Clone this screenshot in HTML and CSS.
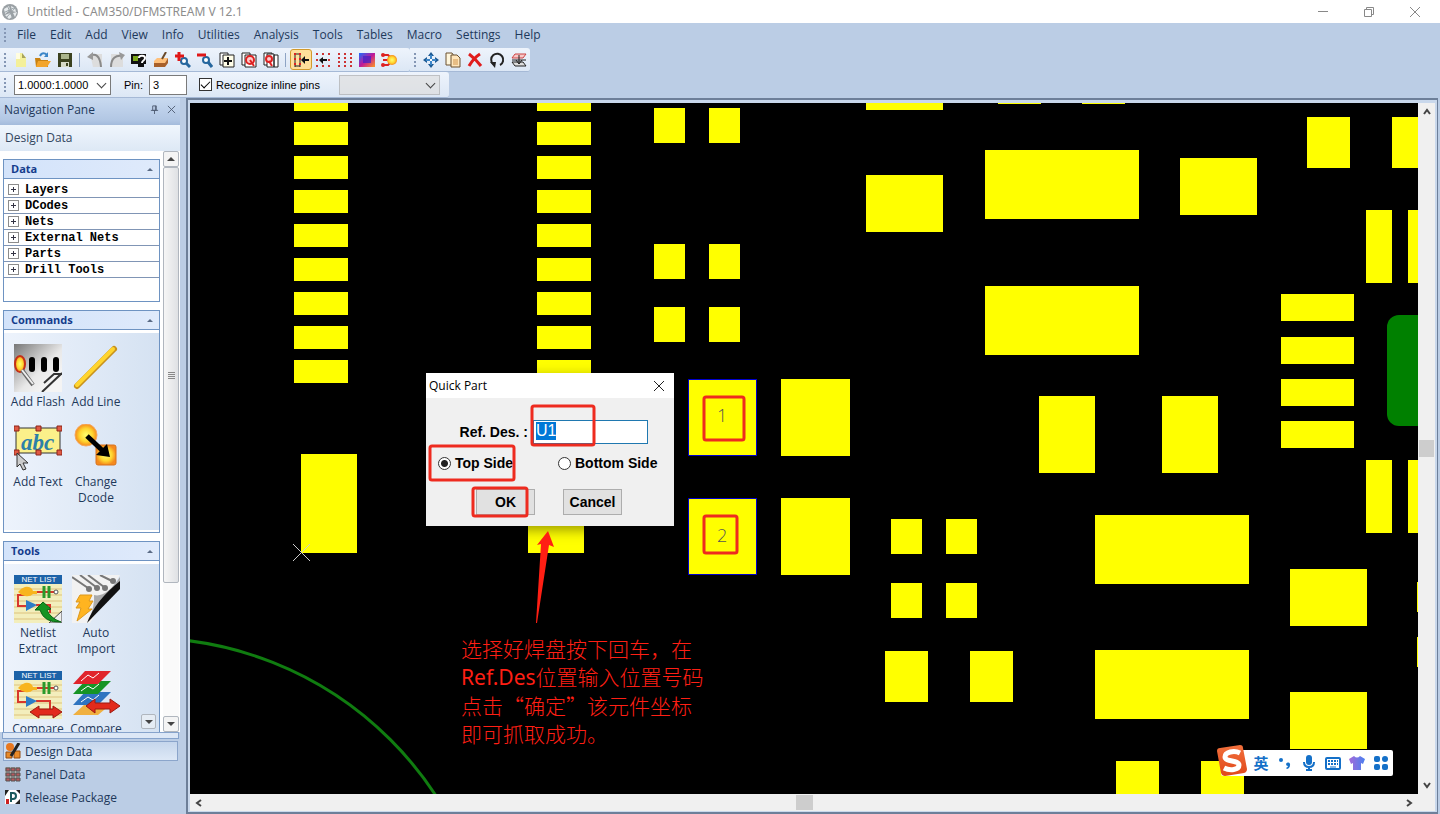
FILE: index.html
```html
<!DOCTYPE html>
<html lang="en">
<head>
    <meta charset="UTF-8">
    <meta name="viewport" content="width=device-width, initial-scale=1.0">
    <title>Untitled - CAM350/DFMSTREAM V 12.1</title>
    <link rel="stylesheet" href="styles.css">
</head>
<body>
<svg class="defs" width="0" height="0">
    <defs>
        <linearGradient id="gray" x1="0" y1="0" x2="1" y2="1"><stop offset="0" stop-color="#777"/><stop offset=".55" stop-color="#e8e8e8"/><stop offset="1" stop-color="#fff"/></linearGradient>
        <radialGradient id="glow"><stop offset="0" stop-color="#ffff70"/><stop offset=".6" stop-color="#ffd530"/><stop offset="1" stop-color="#f58a1c"/></radialGradient>
        <linearGradient id="rainbow" x1="0" y1="0" x2="1" y2="1"><stop offset="0" stop-color="#1a6cff"/><stop offset=".5" stop-color="#c0189a"/><stop offset="1" stop-color="#ff9a20"/></linearGradient>
        <linearGradient id="shirt"><stop offset="0" stop-color="#a56ad8"/><stop offset="1" stop-color="#4a80f0"/></linearGradient>
        <linearGradient id="logo" x1="0" y1="0" x2="0" y2="1"><stop offset="0" stop-color="#f2703c"/><stop offset="1" stop-color="#e0481a"/></linearGradient>
        <symbol id="netlist" viewBox="0 0 48 48">
            <rect width="48" height="48" fill="#f3eebc"/>
            <path d="M0 14h48M0 20h48M0 26h48M0 32h48M0 38h48M0 44h48" stroke="#ddc27e"/>
            <rect width="48" height="9" fill="#1c62a8"/>
            <text x="25" y="7" class="net-label">NET LIST</text>
            <path d="M12 20H4v11h10M20 17h20M22 30h14v8" fill="none" stroke="#d8372c" stroke-width="2"/>
            <path d="M4 17q3-4 7-5 6-1 8 4h4v3h-4q-3 3-8 2-4-1-7-4z" fill="#f8b51e"/>
            <path d="M30 11v12M35 11v12" stroke="#2a9a2c" stroke-width="3"/>
            <circle cx="42" cy="17" r="2" fill="#fff" stroke="#555"/>
            <path d="M12 25l11 5-11 6z" fill="#2d7cc7"/>
        </symbol>
    </defs>
</svg>

<header class="titlebar">
    <svg class="app-icon" viewBox="0 0 16 16"><circle cx="8" cy="8" r="8" fill="#9aa0a4"/><path d="M2 5l5-3 1 4-5 4zM9 2l4 2 1 4-4-1zM3 11l5-2 2 4-3 2zM11 9l4-1-2 5z" fill="#e8ecee"/><path d="M1 9l13-6M4 14L13 4M5 1l6 14" stroke="#9aa3a8"/></svg>
    <span class="title">Untitled - CAM350/DFMSTREAM V 12.1</span>
    <div class="window-buttons">
        <button aria-label="Minimize"><svg viewBox="0 0 12 12"><path d="M1 5.500h10"/></svg></button>
        <button aria-label="Restore"><svg viewBox="0 0 12 12"><path d="M1.500 3.500h7v7h-7zM3.500 3v-1.500h7v7h-2"/></svg></button>
        <button aria-label="Close"><svg viewBox="0 0 12 12"><path d="M1 1l10 10M11 1L1 11"/></svg></button>
    </div>
</header>

<nav class="menubar">
    <i class="grip"></i>
    <a href="#">File</a>
    <a href="#">Edit</a>
    <a href="#">Add</a>
    <a href="#">View</a>
    <a href="#">Info</a>
    <a href="#">Utilities</a>
    <a href="#">Analysis</a>
    <a href="#">Tools</a>
    <a href="#">Tables</a>
    <a href="#">Macro</a>
    <a href="#">Settings</a>
    <a href="#">Help</a>
</nav>

<div class="toolbars">
    <div class="toolbar main-tools">
        <i class="grip"></i>
        <button aria-label="New"><svg viewBox="0 0 16 16"><path d="M3 1h6l4 5v9H3z" fill="#f4f09a"/><path d="M9 1v5h4z" fill="#a8a45c"/><path d="M3 1h4v6H3z" fill="#fffde0"/></svg></button>
        <button aria-label="Open"><svg viewBox="0 0 16 16"><path d="M0 6h5l1 2h7v7H1z" fill="#c98212"/><path d="M3 9h13l-4 6H1z" fill="#f3a52c"/><path d="M5 4c2-4 5-3 7-1" fill="none" stroke="#3c86c8" stroke-width="2"/><path d="M13 0v5H9z" fill="#3c86c8"/></svg></button>
        <button aria-label="Save"><svg viewBox="0 0 16 16"><path d="M1 1h14v14H1z" fill="#3b4220"/><path d="M4 2h8v5H4z" fill="#a9b48c"/><path d="M4 10h8v5H4z" fill="#d6dac8"/><path d="M9 11h2v3H9z" fill="#3b4220"/></svg></button>
        <i class="separator"></i>
        <button aria-label="Undo"><svg viewBox="0 0 16 16"><path d="M3 2h12v13H6z" fill="#ddd"/><path d="M3 4c5-3 10-1 11 11" fill="none" stroke="#8a8a8a" stroke-width="2"/><path d="M6 0v8L0 5z" fill="#999"/></svg></button>
        <button aria-label="Redo"><svg viewBox="0 0 16 16"><path d="M2 2h12v13H2z" fill="#ddd"/><path d="M2 15C2 6 7 3 13 4" fill="none" stroke="#8a8a8a" stroke-width="2"/><path d="M10 0l6 3-4 5z" fill="#999"/></svg></button>
        <button aria-label="Query"><svg viewBox="0 0 16 16"><path d="M0 2h15v10H0z" fill="#111"/><path d="M2 4h5v5H2z" fill="#7aa81c"/><path d="M8 6c0-3 6-3 6 0s-3 2-3 5" fill="none" stroke="#fff" stroke-width="2"/><path d="M7 12h6v3H7z" fill="#111"/></svg></button>
        <button aria-label="Redraw"><svg viewBox="0 0 16 16"><path d="M1 9l3-3h11l-3 6H1z" fill="#ffc07a"/><path d="M1 11h11l3-5v5l-3 4H1z" fill="#a8602a"/><path d="M13 0L9 7" stroke="#6a4a2a" stroke-width="2"/></svg></button>
        <button aria-label="Zoom in"><svg viewBox="0 0 16 16"><circle cx="9" cy="9" r="3" fill="#fff" stroke="#26679e" stroke-width="2"/><path d="M11 11l4 4" stroke="#26679e" stroke-width="3"/><path d="M4 0v9M0 4h9" stroke="#e01818" stroke-width="3"/></svg></button>
        <button aria-label="Zoom out"><svg viewBox="0 0 16 16"><circle cx="9" cy="8" r="3" fill="#fff" stroke="#26679e" stroke-width="2"/><path d="M11 10l4 5" stroke="#26679e" stroke-width="3"/><path d="M0 3h9" stroke="#e01818" stroke-width="3"/></svg></button>
        <button aria-label="Add page"><svg viewBox="0 0 16 16"><path d="M1 1h8v12H1z" fill="#fff" stroke="#222"/><path d="M4 3h11v12H4z" fill="#fffde8" stroke="#222"/><path d="M9 5v8M5 9h8" stroke="#111" stroke-width="2"/></svg></button>
        <button aria-label="Zoom page"><svg viewBox="0 0 16 16"><path d="M1 1h8v12H1z" fill="#fff" stroke="#222"/><path d="M4 3h11v12H4z" fill="#fff" stroke="#222"/><circle cx="9" cy="8" r="4" fill="#fcc" stroke="#d22" stroke-width="2"/><path d="M9 8l4 6" stroke="#d22" stroke-width="2"/></svg></button>
        <button aria-label="Previous view"><svg viewBox="0 0 16 16"><path d="M1 1h8v12H1z" fill="#fff" stroke="#222"/><path d="M4 2h7v13H4zM11 3h4v12h-4z" fill="#fff" stroke="#222"/><circle cx="6" cy="7" r="3" fill="#fcc" stroke="#d22" stroke-width="2"/><path d="M6 9l3 5" stroke="#d22" stroke-width="2"/></svg></button>
        <i class="separator"></i>
        <button class="active" aria-label="Snap to object"><svg viewBox="0 0 16 16"><path d="M2 1v14M7 1v14M2 2h5M2 14h5" stroke="#222"/><path d="M2 1v14M7 1v14" stroke="#d22" stroke-width="2" stroke-dasharray="2 3"/><path d="M8 8l4-4v3h4v2h-4v3z" fill="#111"/></svg></button>
        <button aria-label="Snap to grid"><svg viewBox="0 0 16 16"><path d="M1 2h14M1 8h14M1 14h14" stroke="#c33" stroke-width="2" stroke-dasharray="2 4"/><path d="M4 8l4-3v2h4v2H8v3z" fill="#111"/></svg></button>
        <button aria-label="Show grid"><svg viewBox="0 0 16 16"><path d="M1 2h14M1 6h14M1 10h14M1 14h14" stroke="#c33" stroke-width="2" stroke-dasharray="2 4"/></svg></button>
        <button aria-label="Colors"><svg viewBox="0 0 16 16"><path d="M0 1h16v14H0z" fill="url(#rainbow)"/><path d="M4 4h8v7H4z" fill="#3c22c8" opacity=".7"/></svg></button>
        <button aria-label="Highlight"><svg viewBox="0 0 16 16"><path d="M2 3h5l3 3M2 8h6M2 13h5l3-3" fill="none" stroke="#d22" stroke-width="2"/><circle cx="2" cy="3" r="2" fill="#d22"/><circle cx="2" cy="13" r="2" fill="#d22"/><circle cx="11" cy="8" r="5" fill="url(#glow)"/></svg></button>
    </div>
    <div class="toolbar">
        <i class="grip"></i>
        <button aria-label="Move"><svg viewBox="0 0 16 16"><path d="M8 0l3 4H5zM8 16l3-4H5zM0 8l4-3v6zM16 8l-4-3v6z" fill="#1d5a94"/><path d="M8 3v10M3 8h10" stroke="#3c86c8" stroke-width="2"/><path d="M7 7h2v2H7z" fill="#fff"/></svg></button>
        <button aria-label="Copy"><svg viewBox="0 0 16 16"><path d="M1 1h6l2 3v9H1z" fill="#fff6dc" stroke="#6a5030"/><path d="M6 3h6l3 3v9H6z" fill="#ffe6bc" stroke="#6a5030"/><path d="M8 8h5M8 10h5M8 12h5" stroke="#d0944c"/></svg></button>
        <button aria-label="Delete"><svg viewBox="0 0 16 16"><path d="M2 2c4 3 9 8 12 12M13 2C8 5 5 9 2 14" fill="none" stroke="#e01c1c" stroke-width="3"/></svg></button>
        <button aria-label="Rotate"><svg viewBox="0 0 16 16"><path d="M4 12A6 6 0 1 1 11 13" fill="none" stroke="#222" stroke-width="2"/><path d="M1 10l6 0-1 6z" fill="#222"/></svg></button>
        <button aria-label="Mirror"><svg viewBox="0 0 16 16"><path d="M4 2h11l-3 4H1z" fill="#f8c8c8" stroke="#c44"/><path d="M1 10h11l3 4H4z" fill="#ddd" stroke="#222"/><path d="M8 3v9M5 8l3 4 3-4M1 8h14" fill="none" stroke="#222"/></svg></button>
    </div>
</div>

<form class="toolbar options">
    <i class="grip"></i>
    <span class="combo scale"><select aria-label="Scale"><option>1.0000:1.0000</option></select></span>
    <label for="pin">Pin:</label>
    <input id="pin" class="pin" type="text" value="3">
    <label class="inline-pins"><input type="checkbox" checked>Recognize inline pins</label>
    <span class="combo layer"><select aria-label="Layer" disabled><option></option></select></span>
</form>

<main class="workspace">
    <aside class="navigation">
        <div class="pane-title">
            <span>Navigation Pane</span>
            <button aria-label="Pin pane"><svg viewBox="0 0 10 10"><path d="M3 1h4v5H3zM6 1v5M1 6h8M5 6v4"/></svg></button>
            <button aria-label="Close pane"><svg viewBox="0 0 10 10"><path d="M1 1l8 8M9 1L1 9"/></svg></button>
        </div>
        <h2 class="pane-heading">Design Data</h2>
        <div class="pane-scroll">
            <div class="groups">
                <section class="group data">
                    <h3>Data<i></i></h3>
                    <ul class="tree">
                        <li>Layers</li>
                        <li>DCodes</li>
                        <li>Nets</li>
                        <li>External Nets</li>
                        <li>Parts</li>
                        <li>Drill Tools</li>
                    </ul>
                </section>
                <section class="group commands">
                    <h3>Commands<i></i></h3>
                    <div class="tiles">
                        <button>
                            <svg viewBox="0 0 48 48"><path d="M0 0h48v48H0z" fill="url(#gray)"/><path d="M27 48l21-21v21z" fill="#f4f4f4"/><ellipse cx="6" cy="20" rx="5" ry="8" fill="url(#glow)" stroke="#c43018" stroke-width="2"/><rect x="15" y="13" width="6" height="15" rx="3"/><rect x="27" y="13" width="6" height="15" rx="3"/><rect x="39" y="13" width="6" height="15" rx="3"/><path d="M8 26l11 15" stroke="#666" stroke-width="4"/><path d="M8 26l11 14" stroke="#eee" stroke-width="2"/><path d="M28 48l20-19M30 39l10-9h8" fill="none" stroke="#333" stroke-width="2"/></svg>
                            <span>Add Flash</span>
                        </button>
                        <button>
                            <svg viewBox="0 0 48 48"><path d="M5 42L42 5" stroke="#c8921c" stroke-width="6" stroke-linecap="round"/><path d="M5 41L41 5" stroke="#ffd52e" stroke-width="4" stroke-linecap="round"/></svg>
                            <span>Add Line</span>
                        </button>
                        <button>
                            <svg viewBox="0 0 48 48"><path d="M2 4h44v25H2z" fill="#fbf08a" stroke="#333"/><text x="7" y="26" class="abc">abc</text><path d="M0 2h5v5H0zM22 2h5v5h-5zM43 2h5v5h-5zM0 26h5v5H0zM22 26h5v5h-5zM43 26h5v5h-5z" fill="#e05a44" stroke="#8c2418"/><path d="M3 29v14l3-3 3 6 3-1-3-6h5z" fill="#ccc" stroke="#333"/></svg>
                            <span>Add Text</span>
                        </button>
                        <button>
                            <svg viewBox="0 0 48 48"><circle cx="14" cy="11" r="11" fill="url(#glow)" stroke="#f5a860"/><rect x="24" y="21" width="20" height="20" rx="2" fill="url(#glow)" stroke="#d8721c"/><path d="M15 12l17 16" stroke="#000" stroke-width="5"/><path d="M38 33l-14-2 11-11z"/></svg>
                            <span>Change Dcode</span>
                        </button>
                    </div>
                </section>
                <section class="group tools">
                    <h3>Tools<i></i></h3>
                    <div class="tiles">
                        <button>
                            <svg viewBox="0 0 48 48"><use href="#netlist"/><path d="M35 48l13-12v12z" fill="#eee" stroke="#444"/><path d="M21 35l8-8 8 7-4 1q3 8 14 12-17 1-21-12z" fill="#149422" stroke="#0a6414"/></svg>
                            <span>Netlist Extract</span>
                        </button>
                        <button>
                            <svg viewBox="0 0 48 48"><path d="M0 0h48L18 48H0z" fill="#f2f2f2"/><path d="M0 2l16 11M8 0l16 12M16 0l16 12M28 0l12 6" stroke="#777" stroke-width="2"/><path d="M48 8L17 46q6-17 5-26 12 3 26-18z" fill="#aaa"/><path d="M48 6v8L15 48q8-22 33-42z" fill="#111"/><g fill="#777"><circle cx="17" cy="14" r="3"/><circle cx="25" cy="13" r="3"/><circle cx="33" cy="13" r="3"/><circle cx="41" cy="6" r="3"/></g><path d="M8 20h12l-3 6h4l-5 8h4L5 46l4-13H4l4-6H4z" fill="#ffb420" stroke="#dc981c"/></svg>
                            <span>Auto Import</span>
                        </button>
                        <button>
                            <svg viewBox="0 0 48 48"><use href="#netlist"/><path d="M16 41l9-6v3h14v-3l9 6-9 6v-3H25v3z" fill="#e22a1c" stroke="#9c1a10"/></svg>
                            <span>Compare</span>
                        </button>
                        <button>
                            <svg viewBox="0 0 48 48"><path d="M13 33h26L26 44H1z" fill="#f0b040"/><path d="M13 21h26L26 34H1z" fill="#2f74c0"/><path d="M13 10h26L26 23H1z" fill="#169426"/><path d="M13 0h26L26 13H1z" fill="#e0242c"/><path d="M9 10l7-6 5 3 6-5M9 20l7-5 5 3 6-5M9 31l7-5 5 3 6-5" fill="none" stroke="#fff"/><path d="M14 35l9-7v4h15v-4l10 7-10 7v-4H23v4z" fill="#e22a1c" stroke="#9c1a10"/></svg>
                            <span>Compare</span>
                        </button>
                    </div>
                </section>
                <button class="more" aria-label="More tools"></button>
            </div>
            <div class="pane-bar">
                <button class="up" aria-label="Scroll up"></button>
                <div class="thumb"></div>
                <button class="down" aria-label="Scroll down"></button>
            </div>
        </div>
        <div class="splitter"></div>
        <div class="pane-tabs">
            <button class="selected"><svg viewBox="0 0 16 16"><circle cx="5" cy="4" r="4" fill="#e87820"/><path d="M1 9h6v6H1zM9 8h6v7H9z" fill="#e88a28" stroke="#944c10"/><path d="M14 0L6 13" stroke="#222" stroke-width="3"/></svg>Design Data</button>
            <button><svg viewBox="0 0 16 16"><path d="M0 1h15v14H0z" fill="#aaa"/><path d="M1 2h4v3H1zM6 2h4v3H6zM11 2h4v3h-4zM1 7h4v3H1zM6 7h4v3H6zM11 7h4v3h-4zM1 12h4v3H1zM6 12h4v3H6zM11 12h4v3h-4z" fill="#b8585c" stroke="#555"/></svg>Panel Data</button>
            <button><svg viewBox="0 0 16 16"><path d="M0 1h15v14H0z" fill="#fff"/><path d="M0 1h4l-4 6zM11 1h4v4zM10 15l5-5v5z" fill="#222"/><path d="M1 10h3v5H1z" fill="#c22"/><path d="M6 13V4h2a3 3 0 0 1 0 6H6" fill="none" stroke="#1c5a5c" stroke-width="2"/></svg>Release Package</button>
        </div>
    </aside>

    <section class="editor">
        <div class="board">
            <svg class="layer-view" viewBox="190 103 1228 691" preserveAspectRatio="xMinYMin slice">
                <g fill="#ff0">
                    <path d="M294 88h54v23h-54zM294 122h54v23h-54zM294 156h54v23h-54zM294 190h54v23h-54zM294 224h54v23h-54zM294 258h54v23h-54zM294 292h54v23h-54zM294 326h54v23h-54zM294 360h54v23h-54z"/>
                    <path d="M537 88h54v23h-54zM537 122h54v23h-54zM537 156h54v23h-54zM537 190h54v23h-54zM537 224h54v23h-54zM537 258h54v23h-54zM537 292h54v23h-54zM537 326h54v23h-54zM537 360h54v23h-54z"/>
                    <path d="M301 454h56v99h-56zM528 454h56v99h-56z"/>
                    <path d="M654 108h31v35h-31zM709 108h31v35h-31zM654 244h31v35h-31zM709 244h31v35h-31zM654 307h31v35h-31zM709 307h31v35h-31z"/>
                    <path d="M781 379h69v77h-69zM781 498h69v77h-69z"/>
                    <path d="M866 53h77v57h-77zM866 175h77v57h-77zM1180 158h77v57h-77zM1290 569h77v57h-77zM1290 692h77v57h-77z"/>
                    <path d="M998 53h43v51h-43zM1082 53h43v51h-43zM1307 117h43v51h-43zM1392 117h43v51h-43z"/>
                    <path d="M985 150h154v69H985zM985 286h154v69H985zM1095 515h154v69h-154zM1095 650h154v69h-154z"/>
                    <path d="M1366 210h26v73h-26zM1408 210h26v73h-26zM1366 460h26v73h-26zM1408 460h26v73h-26z"/>
                    <path d="M1281 294h73v27h-73zM1281 337h73v27h-73zM1281 379h73v27h-73zM1281 421h73v27h-73z"/>
                    <path d="M1039 396h56v77h-56zM1162 396h56v77h-56z"/>
                    <path d="M891 519h31v35h-31zM946 519h31v35h-31zM891 583h31v35h-31zM946 583h31v35h-31z"/>
                    <path d="M885 651h43v51h-43zM970 651h43v51h-43zM1116 761h43v51h-43zM1201 761h43v51h-43z"/>
                    <path d="M1417 582h31v30h-31zM1417 637h31v30h-31z"/>
                </g>
                <path d="M688 379h69v77h-69zM688 498h69v77h-69z" fill="#00c"/>
                <path d="M689 380h67v75h-67zM689 499h67v75h-67z" fill="#ff0"/>
                <rect x="1387" y="315" width="60" height="111" rx="12" fill="#008000"/>
                <circle cx="145" cy="985" r="347" fill="none" stroke="#107c10" stroke-width="3"/>
                <path d="M293 544l17 17M310 544l-17 17" stroke="#ccc"/>
                <text x="717" y="422" class="pad-number">1</text>
                <text x="717" y="542" class="pad-number">2</text>
            </svg>

            <form class="dialog" role="dialog" aria-label="Quick Part">
                <div class="dialog-title">
                    <span>Quick Part</span>
                    <button type="button" aria-label="Close"><svg viewBox="0 0 12 12"><path d="M1 1l10 10M11 1L1 11"/></svg></button>
                </div>
                <div class="dialog-body">
                    <div class="ref-row">
                        <label for="refdes">Ref. Des. :</label>
                        <input id="refdes" type="text" value="U1" autofocus>
                    </div>
                    <div class="side-row">
                        <label><input type="radio" name="side" checked>Top Side</label>
                        <label><input type="radio" name="side">Bottom Side</label>
                    </div>
                    <div class="button-row">
                        <button type="button">OK</button>
                        <button type="button">Cancel</button>
                    </div>
                </div>
            </form>

            <svg class="marks" viewBox="190 103 1228 691" preserveAspectRatio="xMinYMin slice">
                <g fill="none" stroke="#ee2b1f" stroke-width="3">
                    <rect x="532" y="406" width="62" height="39" rx="2"/>
                    <rect x="430" y="446" width="84" height="34" rx="2"/>
                    <rect x="473" y="488" width="54" height="28" rx="2"/>
                    <rect x="704" y="397" width="40" height="43" rx="2"/>
                    <rect x="704" y="516" width="33" height="37" rx="2"/>
                </g>
                <path d="M548 531l6 16-5-2-12 78h-1l5-79-4 1z" fill="#ff1f14"/>
            </svg>

            <p class="note" lang="zh">选择好焊盘按下回车，在<br><span>Ref.Des</span>位置输入位置号码<br>点击“确定”该元件坐标<br>即可抓取成功。</p>

            <div class="ime">
                <svg class="ime-logo" viewBox="0 0 32 32"><path d="M1 6q0-3 3-3L24 0q3 0 3 3l4 21q0 3-3 4L9 31q-3 0-4-3z" fill="url(#logo)"/><path d="M24 8C18 5 9 7 9 12s14 3 14 8-9 6-15 3" fill="none" stroke="#fff" stroke-width="5"/></svg>
                <button lang="zh">英</button>
                <button aria-label="Punctuation"><svg viewBox="0 0 16 16"><circle cx="4" cy="5" r="2"/><path d="M9 9a2 2 0 1 1 4 1q0 3-3 4l-1-1q2-1 2-2-2 0-2-2z"/></svg></button>
                <button aria-label="Voice"><svg viewBox="0 0 16 16"><rect x="5" y="0" width="6" height="10" rx="3"/><path d="M3 7q0 5 5 5t5-5M8 12v3M5 15h6" fill="none" stroke="#1470c8" stroke-width="2"/></svg></button>
                <button aria-label="Keyboard"><svg viewBox="0 0 16 16"><rect x="1" y="3" width="14" height="11" rx="1" fill="none" stroke="#1470c8" stroke-width="2"/><path d="M3 6h10M3 9h10" stroke="#1470c8" stroke-width="2" stroke-dasharray="2 1"/><path d="M5 12h6" stroke="#1470c8"/></svg></button>
                <button aria-label="Skins"><svg viewBox="0 0 16 16"><path d="M5 1q3 3 6 0l5 3-2 5-2-1v7H4V8L2 9 0 4z" fill="url(#shirt)"/></svg></button>
                <button aria-label="Toolbox"><svg viewBox="0 0 16 16"><rect x="1" y="1" width="6" height="6" rx="2"/><circle cx="12" cy="4" r="3"/><rect x="1" y="9" width="6" height="6" rx="2"/><rect x="9" y="9" width="6" height="6" rx="2"/></svg></button>
            </div>
        </div>
        <div class="scroll-y">
            <svg viewBox="0 0 10 10"><path d="M2 7l3-4 3 4"/></svg>
            <i></i>
            <svg viewBox="0 0 10 10"><path d="M2 3l3 4 3-4"/></svg>
        </div>
        <div class="scroll-x">
            <svg viewBox="0 0 10 10"><path d="M7 2L3 5l4 3"/></svg>
            <i></i>
            <svg viewBox="0 0 10 10"><path d="M3 2l4 3-4 3"/></svg>
        </div>
    </section>
</main>

<script>
    document.getElementById('refdes').select();
</script>
</body>
</html>
```
FILE: styles.css
```css
* {
    box-sizing: border-box;
}
body {
    margin: 0;
    height: 100vh;
    display: flex;
    flex-direction: column;
    overflow: hidden;
    background: #bbcde5;
    color: #1e395b;
    font-family: "Open Sans", sans-serif;
    font-size: 12px;
}
button {
    border: 0;
    padding: 0;
    background: none;
    color: inherit;
    font: inherit;
}
svg {
    display: block;
}
.defs {
    position: absolute;
}

/* title bar */
.titlebar {
    height: 23px;
    flex: none;
    display: flex;
    align-items: center;
    background: #fff;
    color: #8d8d8d;
    font-family: "Noto Sans", sans-serif;
}
.app-icon {
    width: 16px;
    height: 16px;
    margin: 0 9px 0 2px;
}
.window-buttons {
    margin-left: auto;
    display: flex;
}
.window-buttons button {
    width: 46px;
    height: 20px;
    display: flex;
    align-items: center;
    justify-content: center;
}
.window-buttons button:last-child {
    margin-right: 2px;
}
.window-buttons svg {
    width: 12px;
    height: 12px;
    fill: none;
    stroke: #888;
}

/* menu and toolbars */
.grip {
    width: 2px;
    height: 14px;
    margin: 0 4px;
    flex: none;
    background: repeating-linear-gradient(#8496b4 0 2px, transparent 2px 4px);
}
.menubar {
    height: 25px;
    flex: none;
    display: flex;
    align-items: center;
    padding-bottom: 2px;
}
.menubar a {
    padding: 0 7px;
    color: #1e395b;
    text-decoration: none;
}
.toolbars {
    display: flex;
    flex: none;
}
.toolbar {
    height: 24px;
    display: flex;
    align-items: center;
    background: linear-gradient(#eef4fc, #dce7f5);
    border-bottom: 1px solid #a5b9d6;
    border-radius: 0 3px 3px 0;
}
.main-tools {
    padding-right: 10px;
}
.toolbar button {
    width: 22px;
    height: 21px;
    display: flex;
    align-items: center;
    justify-content: center;
}
.toolbar svg {
    width: 16px;
    height: 16px;
}
.toolbar .active {
    background: #ffdf9a;
    border: 1px solid #d29a2c;
    border-radius: 3px;
}
.separator {
    width: 1px;
    height: 14px;
    margin: 0 4px 0 3px;
    background: #8ea4c4;
}
.options {
    width: 449px;
    height: 26px;
    flex: none;
    color: #000;
    font-family: "Liberation Sans", sans-serif;
    font-size: 11px;
}
.combo {
    position: relative;
}
.combo::after {
    content: "";
    position: absolute;
    right: 6px;
    top: 5px;
    width: 6px;
    height: 6px;
    border-right: 1px solid #444;
    border-bottom: 1px solid #444;
    transform: rotate(45deg);
    pointer-events: none;
}
.combo select,
.pin {
    height: 20px;
    border: 1px solid #7a7a7a;
    border-radius: 0;
    padding: 0 3px;
    background: #fff;
    color: #000;
    font: inherit;
}
.combo select {
    appearance: none;
    display: block;
    width: 100%;
}
.scale {
    width: 97px;
    margin: 0 13px 0 4px;
}
.pin {
    width: 38px;
    margin: 0 12px 0 6px;
}
.inline-pins {
    display: flex;
    align-items: center;
    gap: 4px;
}
.inline-pins input {
    appearance: none;
    width: 13px;
    height: 13px;
    margin: 0;
    border: 1px solid #333;
    background: #fff;
}
.inline-pins input:checked::before {
    content: "";
    display: block;
    width: 8px;
    height: 4px;
    margin: 2px 1px;
    border-left: 1px solid #000;
    border-bottom: 1px solid #000;
    transform: rotate(-45deg);
}
.layer {
    width: 101px;
    margin: 0 9px 0 auto;
}
.layer select {
    background: #dfdfdf;
    border-color: #adadad;
}

.workspace {
    flex: 1;
    min-height: 0;
    display: flex;
}

/* navigation pane */
.navigation {
    width: 180px;
    margin-right: 6px;
    flex: none;
    display: flex;
    flex-direction: column;
}
.pane-title {
    height: 27px;
    flex: none;
    display: flex;
    align-items: center;
    gap: 8px;
    padding: 0 4px 4px;
    background: linear-gradient(#c9daf0, #b2c7e4 22px, #a4bbdb);
}
.pane-title span {
    flex: 1;
}
.pane-title svg {
    width: 9px;
    height: 9px;
    fill: none;
    stroke: #4d5a70;
}
.pane-heading {
    height: 26px;
    flex: none;
    margin: 0;
    padding: 0 5px;
    background: linear-gradient(#f0f6fd, #dde8f5);
    color: #33475f;
    font-size: 12px;
    font-weight: normal;
    line-height: 26px;
}
.pane-scroll {
    flex: 1;
    min-height: 0;
    display: flex;
    background: #fff;
}
.groups {
    flex: 1;
    overflow: hidden;
    display: flex;
    flex-direction: column;
    gap: 8px;
    padding: 8px 3px 0;
    position: relative;
}
.group {
    flex: none;
    border: 1px solid #6e93c2;
    background: #fff;
}
.group h3 {
    height: 19px;
    margin: 0;
    padding: 0 6px 0 7px;
    display: flex;
    align-items: center;
    justify-content: space-between;
    background: linear-gradient(90deg, #d3e3fa, #dfeafb);
    border-bottom: 1px solid #6e93c2;
    color: #143c8c;
    font-size: 11px;
    line-height: 18px;
}
.group h3 i {
    border: 3px solid transparent;
    border-top: 0;
    border-bottom-color: #5a6b85;
}
.data {
    height: 143px;
}
.commands {
    height: 223px;
}
.tools {
    height: 240px;
}
.tree {
    margin: 0;
    padding: 3px 0 0;
    list-style: none;
    color: #000;
    font: bold 12px/16px "Liberation Mono", monospace;
}
.tree li {
    height: 16px;
    display: flex;
    align-items: center;
    gap: 6px;
    padding-left: 4px;
    border-bottom: 1px solid #8095b5;
}
.tree li::before {
    content: "";
    width: 9px;
    height: 9px;
    border: 1px solid #8c8c8c;
    background: linear-gradient(#334, #334) center / 5px 1px no-repeat, linear-gradient(#334, #334) center / 1px 5px no-repeat;
}
.tiles {
    height: 197px;
    margin-top: 3px;
    padding: 11px 0 0 5px;
    display: grid;
    grid-template-columns: 58px 58px;
    grid-template-rows: 80px 80px;
    background: linear-gradient(90deg, #edf3fc, #d5e2f2);
}
.tools .tiles {
    grid-template-rows: 96px 80px;
}
.tiles button {
    display: flex;
    flex-direction: column;
    align-items: center;
    justify-content: flex-start;
    gap: 2px;
    line-height: 16px;
}
.tiles span {
    width: 56px;
}
.tiles svg {
    width: 48px;
    height: 48px;
    flex: none;
}
.net-label {
    fill: #fff;
    font: 8px "Liberation Sans", sans-serif;
    text-anchor: middle;
}
.abc {
    fill: #2c7fa8;
    font: italic bold 23px "Liberation Serif", serif;
}
.more {
    position: absolute;
    right: 7px;
    bottom: 3px;
    width: 15px;
    height: 15px;
    background: #e5ecf4;
}
.more,
.pane-bar button {
    border: 1px solid #b0b6be;
    border-radius: 2px;
    display: flex;
    align-items: center;
    justify-content: center;
}
.pane-bar {
    width: 16px;
    margin-right: 1px;
    display: flex;
    flex-direction: column;
    background: #fafafa;
}
.pane-bar button {
    height: 16px;
    flex: none;
    background: #f4f4f4;
}
.up::before,
.down::before,
.more::before {
    content: "";
    border-left: 4px solid transparent;
    border-right: 4px solid transparent;
}
.up::before {
    border-bottom: 4px solid #444;
}
.down::before,
.more::before {
    border-top: 4px solid #444;
}
.thumb {
    flex: 0 1 416px;
    margin-bottom: auto;
    border: 1px solid #b0b6be;
    border-radius: 2px;
    background: repeating-linear-gradient(#888 0 1px, transparent 1px 2px) center / 7px 7px no-repeat, linear-gradient(90deg, #f6f6f6, #dfe1e4);
}
.splitter {
    height: 7px;
    margin: 0 1px 0 2px;
    flex: none;
    border: 1px solid #86a3cc;
    background: #dce7f6;
}
.pane-tabs {
    flex: none;
    padding: 2px 2px 7px 3px;
    display: flex;
    flex-direction: column;
    gap: 3px;
}
.pane-tabs button {
    height: 20px;
    display: flex;
    align-items: center;
    gap: 4px;
    padding-left: 1px;
    border: 1px solid transparent;
}
.pane-tabs svg {
    width: 16px;
    height: 16px;
}
.pane-tabs .selected {
    border-color: #8ba5cb;
    background: linear-gradient(#c5d6ec, #dde8f6);
}

/* board */
.editor {
    flex: 1;
    min-width: 0;
    margin-right: 2px;
    display: grid;
    grid-template-columns: 1fr 17px;
    grid-template-rows: 1fr 17px;
    padding: 3px 2px 1px 2px;
    border: 2px solid #6d7f99;
    border-right-width: 1px;
    background: #f0f0f0;
    box-shadow: inset 2px 3px #c9d8ec, inset -2px -1px #c9d8ec;
}
.board {
    position: relative;
    overflow: hidden;
    background: #000;
}
.layer-view,
.marks {
    position: absolute;
    top: 0;
    left: 0;
    width: 100%;
    height: 100%;
}
.marks {
    pointer-events: none;
}
.pad-number {
    fill: #555;
    font: 300 18px "Open Sans", sans-serif;
}
.note {
    position: absolute;
    left: 271px;
    top: 531px;
    margin: 0;
    color: #ff1f14;
    font: 300 21px/28px "Noto Sans CJK SC", sans-serif;
}
.note span {
    font-family: "Noto Sans", sans-serif;
    font-weight: normal;
}
.scroll-y,
.scroll-x {
    display: flex;
    align-items: center;
    justify-content: space-between;
}
.scroll-y {
    flex-direction: column;
    padding: 4px 0;
}
.scroll-x {
    padding: 0 4px;
}
.scroll-y svg,
.scroll-x svg {
    width: 10px;
    height: 10px;
    fill: none;
    stroke: #444;
    stroke-width: 2;
}
.scroll-y i,
.scroll-x i {
    width: 15px;
    height: 17px;
    background: #cdcdcd;
}
.scroll-x i {
    width: 17px;
    height: 15px;
}

/* dialog */
.dialog {
    position: absolute;
    left: 236px;
    top: 270px;
    width: 248px;
    background: #f0f0f0;
    color: #000;
    box-shadow: 0 4px 12px rgba(0, 0, 0, 0.4);
}
.dialog-title {
    height: 25px;
    display: flex;
    align-items: center;
    justify-content: space-between;
    padding: 0 9px 0 3px;
    background: #fff;
}
.dialog-title svg {
    width: 12px;
    height: 12px;
    stroke: #222;
}
.dialog-body {
    padding: 22px 0 11px;
    font: bold 14px/16px "Liberation Sans", sans-serif;
}
.ref-row {
    display: flex;
    align-items: center;
    justify-content: flex-end;
    gap: 5px;
    padding-right: 26px;
}
.ref-row input {
    width: 115px;
    height: 24px;
    padding: 0 2px 3px;
    border: 1px solid #1f78b0;
    outline: 0;
    background: #fff;
    color: #000;
    font: 16px "Liberation Sans", sans-serif;
}
.ref-row input::selection {
    background: #0078d7;
    color: #fff;
}
.side-row {
    display: grid;
    grid-template-columns: 120px 1fr;
    padding-left: 12px;
    margin: 11px 0 18px;
}
.side-row label {
    display: flex;
    align-items: center;
    gap: 4px;
}
.side-row input {
    appearance: none;
    width: 13px;
    height: 13px;
    margin: 0;
    border: 1px solid #333;
    border-radius: 50%;
    background: #fff;
}
.side-row input:checked {
    background: radial-gradient(#222 3px, #fff 4px);
}
.button-row {
    display: flex;
    gap: 28px;
    padding-left: 50px;
}
.button-row button {
    width: 59px;
    height: 26px;
    border: 1px solid #adadad;
    background: #e1e1e1;
}

/* input method bar */
.ime {
    position: absolute;
    right: 25px;
    bottom: 18px;
    height: 26px;
    padding-left: 28px;
    display: flex;
    align-items: center;
    background: #fff;
    border-radius: 2px;
    color: #1470c8;
    font: bold 15px/20px "Noto Sans CJK SC", sans-serif;
}
.ime-logo {
    position: absolute;
    left: -5px;
    top: -5px;
    width: 32px;
    height: 32px;
}
.ime button {
    width: 24px;
    display: flex;
    justify-content: center;
}
.ime button svg {
    width: 16px;
    height: 16px;
    fill: #1470c8;
}
```
